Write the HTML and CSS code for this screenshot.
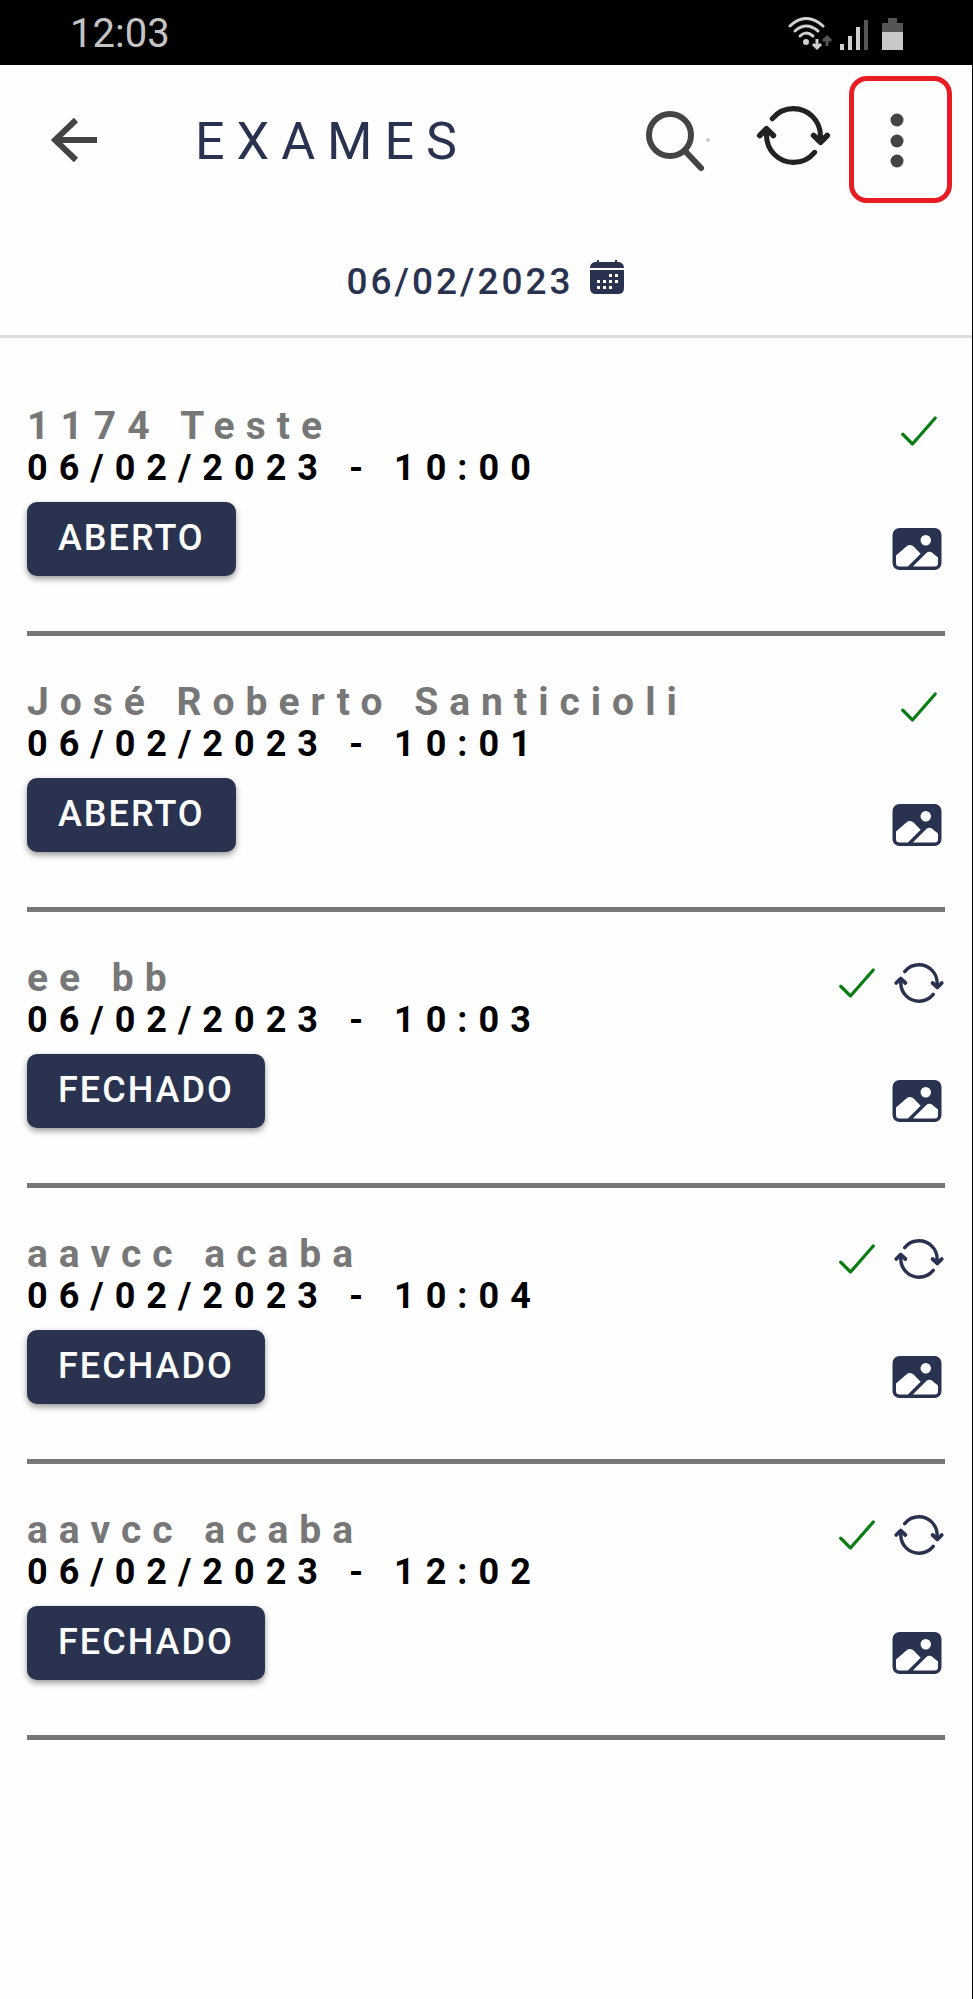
FILE: index.html
```html
<!DOCTYPE html>
<html lang="pt-BR">
<head>
    <meta charset="UTF-8">
    <meta name="viewport" content="width=device-width, initial-scale=1.0">
    <title>Exames</title>
    <link rel="stylesheet" href="styles.css">
</head>
<body>
    <!-- Icon set -->
    <svg class="sprite" aria-hidden="true">
        <symbol id="icon-sync" viewBox="0 0 512 512">
            <path d="M434.67 285.59v-29.8c0-98.73-80.24-178.79-179.2-178.79a179 179 0 00-140.14 67.36m-38.53 82v29.8C76.8 355 157 435 256 435a180.45 180.45 0 00140-66.92" fill="none" stroke="currentColor" stroke-width="34" stroke-linecap="round" stroke-linejoin="round"/>
            <path d="M32 256l44-44 46 44M480 256l-44 44-46-44" fill="none" stroke="currentColor" stroke-width="38" stroke-linecap="round" stroke-linejoin="round"/>
        </symbol>
        <symbol id="icon-check" viewBox="0 0 512 512">
            <path d="M416 128L192 384l-96-96" fill="none" stroke="currentColor" stroke-width="32" stroke-linecap="round" stroke-linejoin="round"/>
        </symbol>
        <symbol id="icon-image" viewBox="0 0 512 512">
            <path d="M416 64H96a64.07 64.07 0 00-64 64v256a64.07 64.07 0 0064 64h320a64.07 64.07 0 0064-64V128a64.07 64.07 0 00-64-64zm-80 64a48 48 0 11-48 48 48.05 48.05 0 0148-48zM96 416a32 32 0 01-32-32v-67.63l94.84-84.3a48.06 48.06 0 0165.8 1.9l64.81 64.72L172.37 416zm352-32a32 32 0 01-32 32H217.63l121.42-121.42a47.72 47.72 0 0161.64-.16L448 333.84z" fill="currentColor"/>
        </symbol>
    </svg>

    <div class="status-bar">
        <span>12:03</span>
        <svg class="status-icons" viewBox="0 0 116 34" aria-hidden="true">
            <g fill="none" stroke="#d0d0d0" stroke-width="3" stroke-linecap="round">
                <path d="M2 9Q18 -6 35 9"/>
                <path d="M7 14Q18 4 30 14"/>
                <path d="M12 19Q18 13 25 19"/>
            </g>
            <circle cx="18" cy="25" r="3" fill="#d0d0d0"/>
            <path d="M29 22v9m-4 -4l4 4 4-4" fill="none" stroke="#d0d0d0" stroke-width="3"/>
            <path d="M39 29v-9m-4 4l4-4 4 4" fill="none" stroke="#555" stroke-width="3"/>
            <path d="M54 33v-6M62 33v-14M70 33V10" stroke="#d0d0d0" stroke-width="4"/>
            <path d="M78 33V3" stroke="#555" stroke-width="4"/>
            <path d="M94 15V6h6V1h9v5h6v9z" fill="#555"/>
            <path d="M94 15h21v18H94z" fill="#c8c8c8"/>
        </svg>
    </div>

    <div class="screen">
        <header class="header">
            <div class="toolbar">
                <button type="button" class="icon-btn" aria-label="Voltar">
                    <svg class="icon-back" viewBox="0 0 48 46"><path d="M46 23H4M25 3L4 23l21 20" fill="none" stroke="currentColor" stroke-width="6"/></svg>
                </button>
                <h1>EXAMES</h1>
                <div class="actions">
                    <button type="button" class="icon-btn" aria-label="Buscar">
                        <svg class="icon-search" viewBox="0 0 72 72">
                            <circle cx="30" cy="31" r="21" fill="none" stroke="currentColor" stroke-width="6"/>
                            <path d="M46 48l15 16" stroke="currentColor" stroke-width="6" stroke-linecap="round"/>
                            <circle cx="68" cy="36" r="2" fill="#ccc"/>
                        </svg>
                    </button>
                    <button type="button" class="icon-btn sync-btn" aria-label="Sincronizar">
                        <svg class="icon-sync-lg"><use href="#icon-sync"/></svg>
                    </button>
                    <button type="button" class="icon-btn menu-btn" aria-label="Menu">
                        <svg class="icon-menu" viewBox="0 0 14 56" fill="currentColor">
                            <circle cx="7" cy="8" r="6.500"/>
                            <circle cx="7" cy="29" r="6.500"/>
                            <circle cx="7" cy="49" r="6.500"/>
                        </svg>
                    </button>
                </div>
            </div>
            <button type="button" class="date-btn">
                <span>06/02/2023</span>
                <svg class="icon-calendar" viewBox="0 0 34 34">
                    <path d="M0 8q0-5 5-6h2V0h2v2h16V0h2v2h2q5 1 5 6z" fill="currentColor"/>
                    <path d="M0 10h34v18q0 6-6 6H6q-6 0-6-6z" fill="currentColor"/>
                    <path d="M19 15.500h3M25 15.500h3M7 21.500h3M13 21.500h3M19 21.500h3M25 21.500h3M7 27.500h3M13 27.500h3M19 27.500h3" stroke="#fff" stroke-width="3"/>
                </svg>
            </button>
        </header>

        <main>
            <ul class="exam-list">
                <li class="exam">
                    <div class="exam-info">
                        <h2>1174 Teste</h2>
                        <p class="exam-date">06/02/2023 - 10:00</p>
                        <button type="button" class="status-btn">ABERTO</button>
                    </div>
                    <div class="exam-icons">
                        <div class="exam-sync">
                            <svg class="icon check"><use href="#icon-check"/></svg>
                        </div>
                        <button type="button" class="icon-btn" aria-label="Imagens"><svg class="icon-image"><use href="#icon-image"/></svg></button>
                    </div>
                </li>
                <li class="exam">
                    <div class="exam-info">
                        <h2>José Roberto Santicioli</h2>
                        <p class="exam-date">06/02/2023 - 10:01</p>
                        <button type="button" class="status-btn">ABERTO</button>
                    </div>
                    <div class="exam-icons">
                        <div class="exam-sync">
                            <svg class="icon check"><use href="#icon-check"/></svg>
                        </div>
                        <button type="button" class="icon-btn" aria-label="Imagens"><svg class="icon-image"><use href="#icon-image"/></svg></button>
                    </div>
                </li>
                <li class="exam">
                    <div class="exam-info">
                        <h2>ee bb</h2>
                        <p class="exam-date">06/02/2023 - 10:03</p>
                        <button type="button" class="status-btn">FECHADO</button>
                    </div>
                    <div class="exam-icons">
                        <div class="exam-sync">
                            <svg class="icon check"><use href="#icon-check"/></svg>
                            <button type="button" class="icon-btn" aria-label="Sincronizar exame"><svg class="icon"><use href="#icon-sync"/></svg></button>
                        </div>
                        <button type="button" class="icon-btn" aria-label="Imagens"><svg class="icon-image"><use href="#icon-image"/></svg></button>
                    </div>
                </li>
                <li class="exam">
                    <div class="exam-info">
                        <h2>aavcc acaba</h2>
                        <p class="exam-date">06/02/2023 - 10:04</p>
                        <button type="button" class="status-btn">FECHADO</button>
                    </div>
                    <div class="exam-icons">
                        <div class="exam-sync">
                            <svg class="icon check"><use href="#icon-check"/></svg>
                            <button type="button" class="icon-btn" aria-label="Sincronizar exame"><svg class="icon"><use href="#icon-sync"/></svg></button>
                        </div>
                        <button type="button" class="icon-btn" aria-label="Imagens"><svg class="icon-image"><use href="#icon-image"/></svg></button>
                    </div>
                </li>
                <li class="exam">
                    <div class="exam-info">
                        <h2>aavcc acaba</h2>
                        <p class="exam-date">06/02/2023 - 12:02</p>
                        <button type="button" class="status-btn">FECHADO</button>
                    </div>
                    <div class="exam-icons">
                        <div class="exam-sync">
                            <svg class="icon check"><use href="#icon-check"/></svg>
                            <button type="button" class="icon-btn" aria-label="Sincronizar exame"><svg class="icon"><use href="#icon-sync"/></svg></button>
                        </div>
                        <button type="button" class="icon-btn" aria-label="Imagens"><svg class="icon-image"><use href="#icon-image"/></svg></button>
                    </div>
                </li>
            </ul>
        </main>
    </div>
</body>
</html>
```
FILE: styles.css
```css
* {
    margin: 0;
    padding: 0;
    box-sizing: border-box;
}

body {
    display: flex;
    flex-direction: column;
    min-height: 100vh;
    font-family: Roboto, "Liberation Sans", sans-serif;
    background: #fefefe;
    color: #29334f;
}

button {
    font-family: inherit;
    color: inherit;
    border: none;
    background: none;
    cursor: pointer;
}

svg {
    display: block;
}

.sprite {
    display: none;
}

.status-bar {
    display: flex;
    align-items: center;
    justify-content: space-between;
    height: 65px;
    padding: 2px 69px 0 70px;
    background: #000;
    color: #c4c4c4;
    font-size: 40px;
}

.status-icons {
    width: 116px;
    height: 34px;
}

.screen {
    flex: 1;
    border-right: 1px solid #000;
}

.header {
    border-bottom: 3px solid #ddd;
}

.toolbar {
    display: flex;
    align-items: center;
    padding: 11px 20px 0 51px;
}

.toolbar .icon-btn {
    color: #444;
}

.icon-back {
    width: 48px;
    height: 46px;
}

h1 {
    flex: 1;
    margin-left: 96px;
    padding-top: 3px;
    font-size: 52px;
    font-weight: 400;
    letter-spacing: 12px;
}

.actions {
    display: flex;
    align-items: center;
}

.icon-search {
    width: 72px;
    height: 72px;
}

.toolbar .sync-btn {
    margin: 0 17px 8px 43px;
    color: #222;
}

.icon-sync-lg {
    width: 77px;
    height: 77px;
}

.menu-btn {
    display: flex;
    align-items: center;
    justify-content: center;
    width: 103px;
    height: 127px;
    padding-right: 7px;
    border: 5px solid #e81c23;
    border-radius: 18px;
}

.icon-menu {
    width: 14px;
    height: 56px;
}

.date-btn {
    display: flex;
    align-items: center;
    justify-content: center;
    gap: 16px;
    width: 100%;
    padding: 57px 2px 31px 0;
    font-size: 37px;
    font-weight: 500;
    line-height: 44px;
    letter-spacing: 3px;
}

.icon-calendar {
    width: 34px;
    height: 34px;
    margin-bottom: 10px;
}

.exam-list {
    list-style: none;
    padding: 22px 27px;
}

.exam {
    display: flex;
    justify-content: space-between;
    height: 276px;
    padding-top: 45px;
    border-bottom: 5px solid #777;
}

h2 {
    font-size: 39px;
    font-weight: 700;
    line-height: 42px;
    letter-spacing: 11px;
    color: #777;
}

.exam-date {
    font-size: 36px;
    font-weight: 700;
    line-height: 42px;
    letter-spacing: 11px;
    color: #000;
}

.status-btn {
    height: 74px;
    margin-top: 13px;
    padding: 0 31px 3px;
    border-radius: 10px;
    background: #29334f;
    color: #fff;
    font-size: 36px;
    font-weight: 500;
    letter-spacing: 2px;
    box-shadow: 0 3px 6px rgba(0, 0, 0, 0.4);
}

.exam-icons {
    display: flex;
    flex-direction: column;
    align-items: flex-end;
    gap: 64px;
}

.exam-sync {
    display: flex;
    gap: 10px;
}

.icon {
    width: 52px;
    height: 52px;
}

.icon-image {
    width: 56px;
    height: 56px;
}

.check {
    color: #0a7d14;
}
```
